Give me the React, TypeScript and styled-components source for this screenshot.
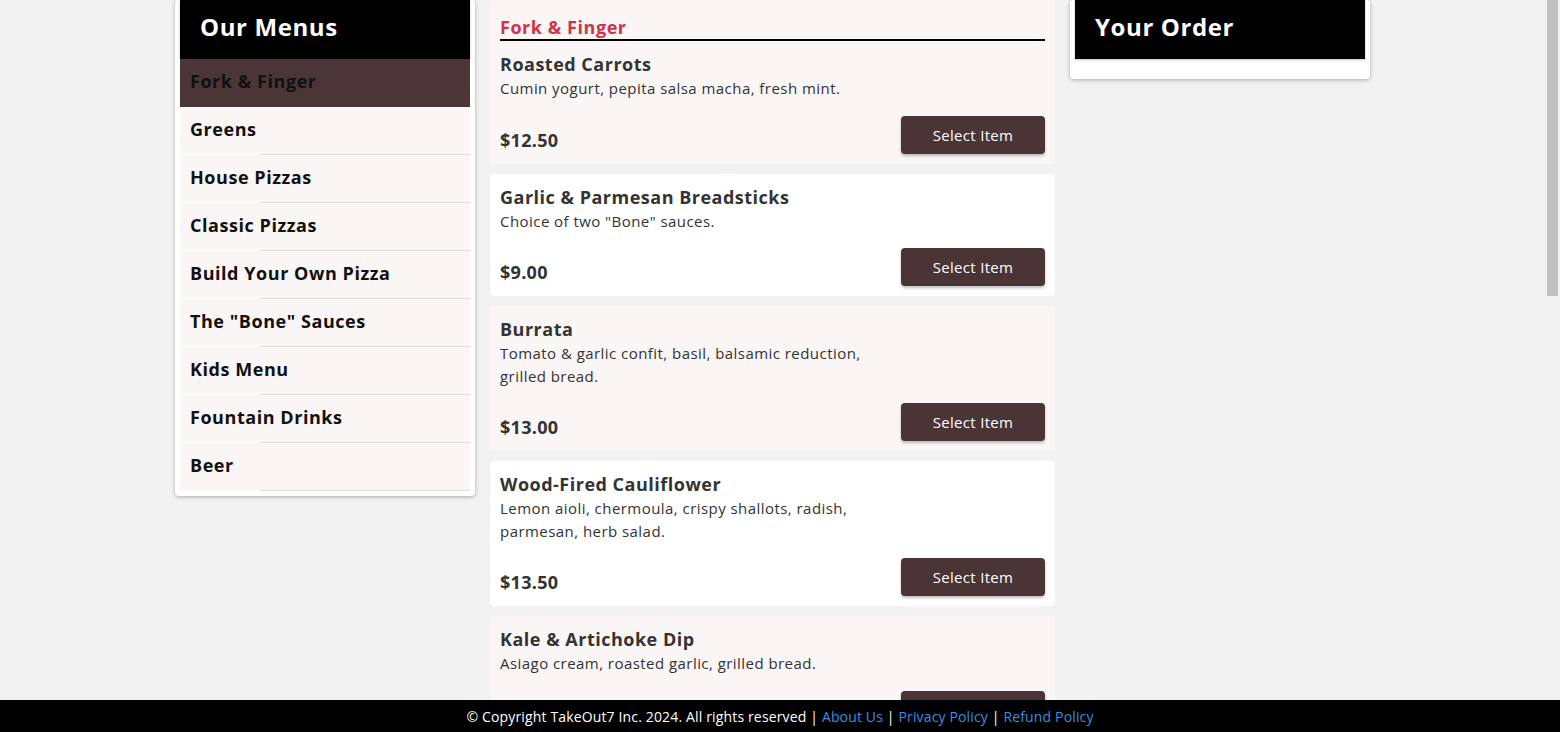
import React from "react";
import styled, { createGlobalStyle } from "styled-components";

const FONT = `"Open Sans", "Noto Sans", Arial, sans-serif`;

const Global = createGlobalStyle`
  html, body { height: 100%; }
  body {
    margin: 0;
    background: #f2f2f2;
    font-family: ${FONT};
    color: #333;
    overflow: hidden;
  }
  #root { height: 100%; }
  * { box-sizing: border-box; }
`;

const Scroller = styled.div`
  height: 100%;
  overflow-y: auto;
  scrollbar-width: none;
  &::-webkit-scrollbar { display: none; }
`;

const ScrollRail = styled.div`
  position: fixed;
  top: 0;
  right: 0;
  width: 15px;
  height: 100vh;
  background: #f2f2f2;
  padding: 0 2px;
  z-index: 1;
`;

const ScrollThumb = styled.div`
  height: 296px;
  background: #c1c1c1;
`;

const Page = styled.div`
  display: grid;
  grid-template-columns: 300px 565px 300px;
  column-gap: 15px;
  justify-content: center;
  align-items: start;
  padding: 0 15px 42px 0;
`;

const SideCard = styled.aside<{ $padBottom: number }>`
  background: #fff;
  border-radius: 4px;
  box-shadow: 0 1px 4px rgba(0, 0, 0, 0.3);
  padding: 0 5px ${(p) => p.$padBottom}px;
`;

const PanelHeader = styled.h2`
  margin: 0;
  height: 59px;
  background: #000;
  color: #fff;
  font-size: 24px;
  font-weight: 700;
  letter-spacing: 0.6px;
  padding: 0 20px 6px;
  display: flex;
  align-items: center;
  box-shadow: 0 1px 2px rgba(0, 0, 0, 0.25);
`;

const MenuList = styled.nav`
  display: flex;
  flex-direction: column;
`;

const MenuItem = styled.div<{ $active?: boolean }>`
  height: 48px;
  display: flex;
  align-items: center;
  padding: 0 10px 3px;
  font-size: 18px;
  font-weight: 700;
  letter-spacing: 0.55px;
  color: #111;
  background: ${(p) => (p.$active ? "#4b3537" : "#faf6f5")};
  border-bottom: 1px solid transparent;
  border-image: ${(p) =>
      p.$active
        ? "linear-gradient(#4b3537, #4b3537)"
        : "linear-gradient(to right, #fdfcfc 80px, #dcdcdc 80px)"}
    1;
  cursor: pointer;
`;

const Center = styled.main`
  display: flex;
  flex-direction: column;
  gap: 10px;
`;

const ItemCard = styled.section<{ $tint: boolean }>`
  background: ${(p) => (p.$tint ? "#faf6f5" : "#ffffff")};
  border-radius: 4px;
  padding: 10px;
`;

const SectionTitle = styled.h3`
  margin: 0 0 10px;
  padding-top: 5px;
  font-size: 18px;
  line-height: 24px;
  font-weight: 700;
  letter-spacing: 0.55px;
  color: #d3324a;
  border-bottom: 2px solid #000;
`;

const ItemName = styled.h4`
  margin: 0;
  font-size: 18px;
  line-height: 27px;
  font-weight: 700;
  letter-spacing: 0.5px;
  color: #333;
`;

const ItemDesc = styled.p`
  margin: -1px 0 0;
  padding-bottom: 1px;
  max-width: 385px;
  font-size: 15px;
  line-height: 22.5px;
  letter-spacing: 0.45px;
  color: #333;
`;

const ItemFoot = styled.div`
  margin-top: 15px;
  display: flex;
  justify-content: space-between;
  align-items: flex-end;
`;

const Price = styled.span`
  font-size: 18px;
  line-height: 27px;
  font-weight: 700;
  letter-spacing: 0.3px;
  color: #333;
`;

const SelectButton = styled.button`
  width: 144px;
  height: 38px;
  border: none;
  border-radius: 4px;
  background: #4a3436;
  color: #fff;
  font-family: ${FONT};
  font-size: 15px;
  letter-spacing: 0.3px;
  box-shadow: 0 2px 3px rgba(0, 0, 0, 0.25);
  cursor: pointer;
`;

const Footer = styled.footer`
  position: fixed;
  left: 0;
  right: 0;
  bottom: 0;
  height: 32px;
  background: #000;
  color: #fff;
  font-size: 14px;
  letter-spacing: 0.15px;
  display: flex;
  align-items: center;
  justify-content: center;
  white-space: pre;
  z-index: 2;
`;

const FootLink = styled.a`
  color: #3a8ee6;
  text-decoration: none;
`;

const menus = [
  "Fork & Finger",
  "Greens",
  "House Pizzas",
  "Classic Pizzas",
  "Build Your Own Pizza",
  'The "Bone" Sauces',
  "Kids Menu",
  "Fountain Drinks",
  "Beer",
];

const items = [
  { name: "Roasted Carrots", desc: "Cumin yogurt, pepita salsa macha, fresh mint.", price: "$12.50" },
  { name: "Garlic & Parmesan Breadsticks", desc: 'Choice of two "Bone" sauces.', price: "$9.00" },
  { name: "Burrata", desc: "Tomato & garlic confit, basil, balsamic reduction, grilled bread.", price: "$13.00" },
  { name: "Wood-Fired Cauliflower", desc: "Lemon aioli, chermoula, crispy shallots, radish, parmesan, herb salad.", price: "$13.50" },
  { name: "Kale & Artichoke Dip", desc: "Asiago cream, roasted garlic, grilled bread.", price: "$12.00" },
  { name: "Meatballs", desc: "Pomodoro, whipped ricotta, basil, grilled bread.", price: "$14.00" },
  { name: "Wood-Fired Wings", desc: "Calabrian chili glaze, blue cheese, celery.", price: "$15.00" },
  { name: "Crispy Brussels Sprouts", desc: "Honey, sherry vinegar, parmesan, toasted almonds.", price: "$12.00" },
  { name: "Fried Calamari", desc: "Lemon, pepperoncini, marinara, garlic aioli.", price: "$14.50" },
  { name: "Garlic Knots", desc: "Parmesan, parsley, marinara.", price: "$8.00" },
];

export default function App() {
  return (
    <>
      <Global />
      <Scroller>
        <Page>
          <SideCard $padBottom={5}>
            <PanelHeader>Our Menus</PanelHeader>
            <MenuList>
              {menus.map((m, i) => (
                <MenuItem key={m} $active={i === 0}>
                  {m}
                </MenuItem>
              ))}
            </MenuList>
          </SideCard>
          <Center>
            {items.map((it, i) => (
              <ItemCard key={it.name} $tint={i % 2 === 0}>
                {i === 0 && <SectionTitle>Fork &amp; Finger</SectionTitle>}
                <ItemName>{it.name}</ItemName>
                <ItemDesc>{it.desc}</ItemDesc>
                <ItemFoot>
                  <Price>{it.price}</Price>
                  <SelectButton>Select Item</SelectButton>
                </ItemFoot>
              </ItemCard>
            ))}
          </Center>
          <SideCard $padBottom={20}>
            <PanelHeader>Your Order</PanelHeader>
          </SideCard>
        </Page>
      </Scroller>
      <ScrollRail aria-hidden>
        <ScrollThumb />
      </ScrollRail>
      <Footer>
        © Copyright TakeOut7 Inc. 2024. All rights reserved | <FootLink href="#">About Us</FootLink> |{" "}
        <FootLink href="#">Privacy Policy</FootLink> | <FootLink href="#">Refund Policy</FootLink>
      </Footer>
    </>
  );
}
